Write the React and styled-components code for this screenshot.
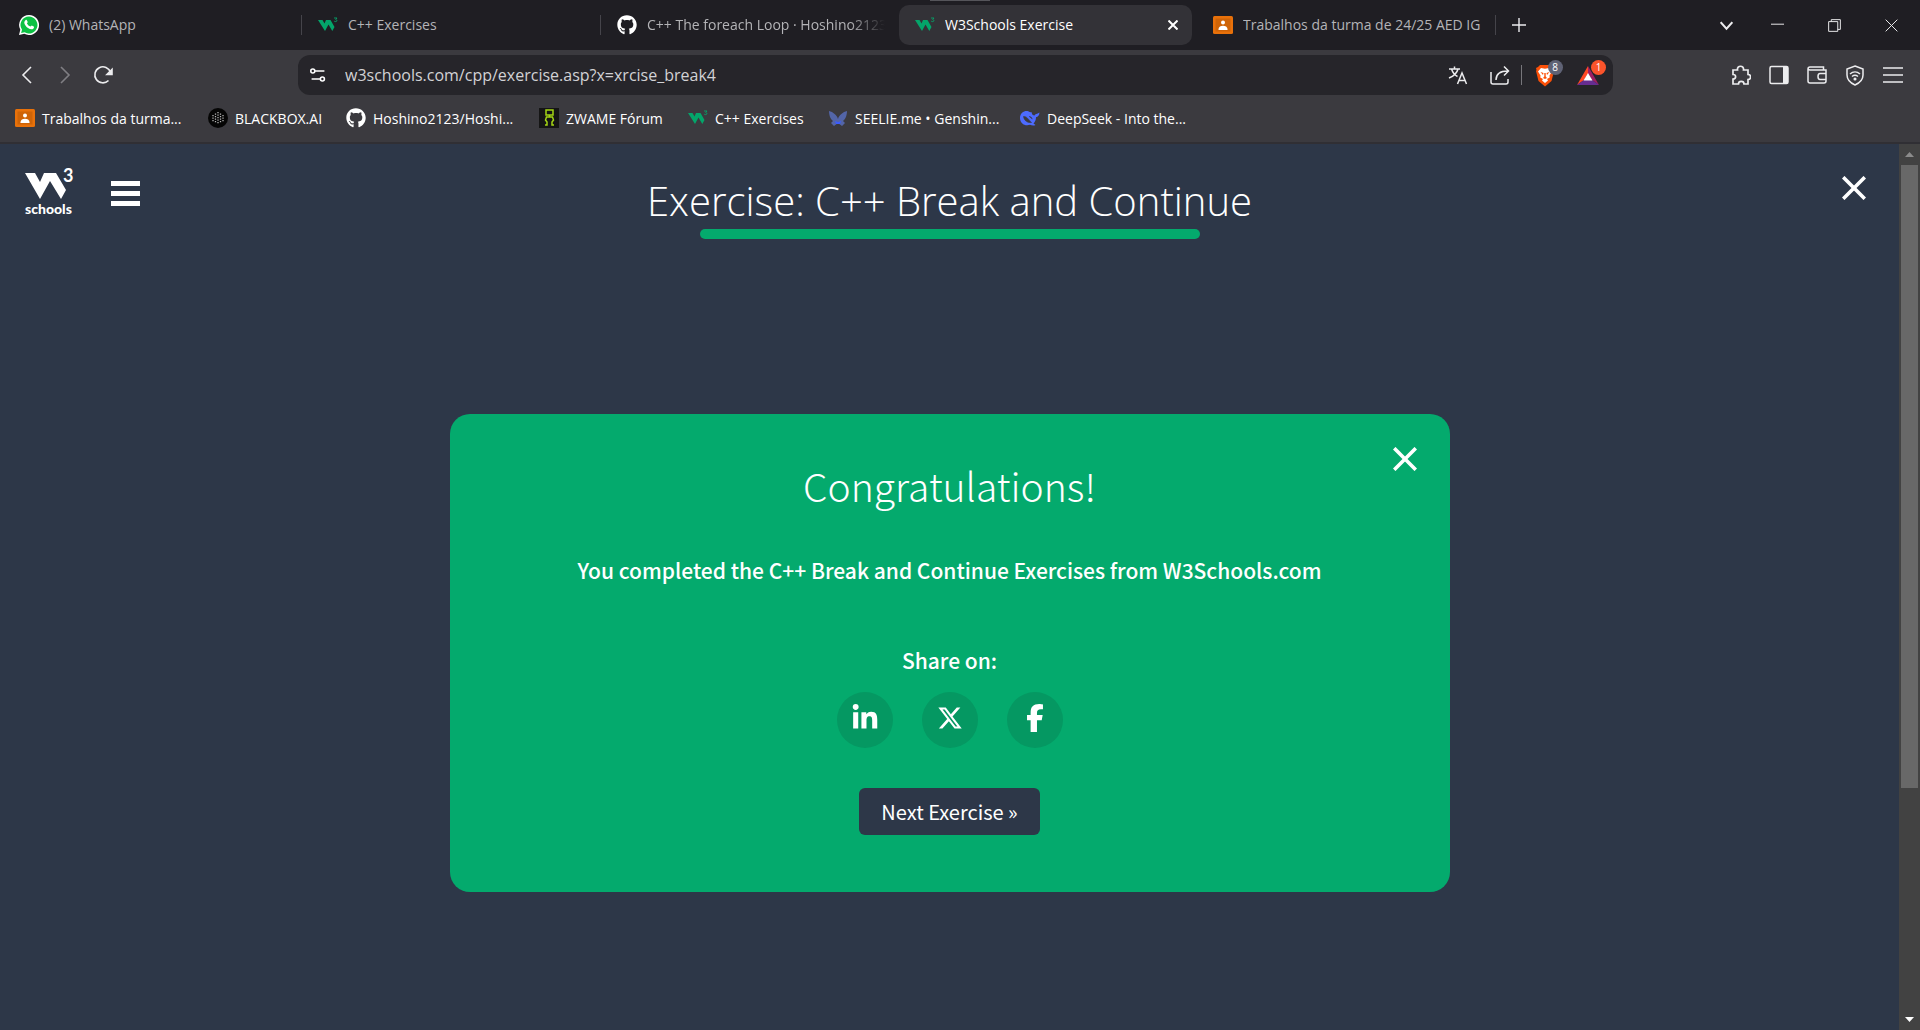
import React from "react";
import styled, { createGlobalStyle, css } from "styled-components";
import { FaLinkedinIn, FaXTwitter, FaFacebookF, FaGithub } from "react-icons/fa6";

const ui = `"Open Sans", "Noto Sans", sans-serif`;
const site = `"Noto Sans CJK SC", "Noto Sans", sans-serif`;

const Global = createGlobalStyle`
  *, *::before, *::after { box-sizing: border-box; }
  body { margin: 0; background: #2d3748; color: #fff; font-family: ${ui}; }
  button { border: 0; padding: 0; background: none; color: inherit; font: inherit; cursor: pointer; }
  a { color: inherit; text-decoration: none; }
  svg { display: block; flex: none; }
`;

const Window = styled.div`
  display: flex;
  flex-direction: column;
  height: 100vh;
  overflow: hidden;
`;

const TabStrip = styled.header`
  position: relative;
  display: flex;
  align-items: center;
  height: 50px;
  flex: none;
  padding-left: 3px;
  background: #1f1e23;
`;

const GrabHandle = styled.span`
  position: absolute;
  top: 0;
  left: calc(50% - 30px);
  width: 60px;
  height: 1px;
  background: #55555a;
`;

const Tab = styled.div`
  display: flex;
  align-items: center;
  gap: 10px;
  width: ${(p) => p.$w}px;
  height: 40px;
  padding: 0 14px 0 16px;
  border-radius: 10px;
  font-size: 14px;
  line-height: 18px;
  color: #b4b4b7;
  ${(p) => p.$active && css`
    margin-right: 5px;
    background: #333237;
    color: #fff;
  `}
`;

const TabTitle = styled.a`
  flex: 1;
  overflow: hidden;
  white-space: nowrap;
  ${(p) => p.$fade && css`mask-image: linear-gradient(to right, #000 85%, transparent);`}
`;

const Divider = styled.span`
  width: 1px;
  height: 20px;
  flex: none;
  background: ${(p) => (p.$light ? "#77767b" : "#45444a")};
`;

const Spacer = styled.div`
  flex: 1;
`;

const IconButton = styled.button`
  display: grid;
  place-items: center;
  flex: none;
  width: ${(p) => p.$w || 38}px;
  height: 40px;
  color: ${(p) => (p.$dim ? "#807f84" : "#ececee")};
`;

const Toolbar = styled.div`
  display: flex;
  align-items: center;
  height: 50px;
  flex: none;
  padding: 0 8px;
  background: #3b3a3f;
`;

const Side = styled.div`
  display: flex;
  width: ${(p) => p.$w}px;
  justify-content: ${(p) => (p.$end ? "flex-end" : "flex-start")};
`;

const AddressBar = styled.form`
  display: flex;
  align-items: center;
  flex: 1;
  height: 40px;
  padding: 0 4px 0 12px;
  border-radius: 12px;
  background: #26252a;
`;

const Address = styled.input`
  flex: 1;
  min-width: 0;
  margin-left: 19px;
  border: 0;
  padding: 0;
  outline: 0;
  background: none;
  color: #d2d2d5;
  font: 400 16px ${ui};
`;

const Badged = styled(IconButton)`
  position: relative;
`;

const Badge = styled.span`
  position: absolute;
  top: 5px;
  left: calc(50% + 3px);
  width: 15px;
  height: 15px;
  border-radius: 8px;
  background: ${(p) => p.$bg};
  color: #fff;
  font-size: 10px;
  line-height: 15px;
  text-align: center;
`;

const Bookmarks = styled.nav`
  display: flex;
  align-items: center;
  height: 44px;
  flex: none;
  padding: 0 15px 6px;
  background: #3b3a3f;
  border-bottom: 2px solid #302f34;
`;

const Bookmark = styled.a`
  display: flex;
  align-items: center;
  gap: 7px;
  width: ${(p) => p.$w}px;
  font-size: 14px;
  white-space: nowrap;
`;

const Viewport = styled.div`
  display: flex;
  flex: 1;
  min-height: 0;
`;

const Page = styled.main`
  display: flex;
  flex-direction: column;
  flex: 1;
  background: #2d3748;
`;

const PageHead = styled.div`
  display: grid;
  grid-template-columns: 1fr auto 1fr;
  align-items: start;
  padding: 24px 0;
`;

const Brand = styled.div`
  display: flex;
  align-items: flex-start;
  gap: 37px;
  padding-left: 24px;
`;

const MenuButton = styled.button`
  display: flex;
  flex-direction: column;
  gap: 5px;
  margin-top: 13px;
`;

const MenuBar = styled.span`
  height: 5px;
  width: 29px;
  background: #fff;
`;

const Heading = styled.div`
  display: flex;
  flex-direction: column;
  align-items: center;
  padding-top: 5px;
`;

const Title = styled.h1`
  margin: 0;
  font: 300 40px/56px ${ui};
`;

const Progress = styled.div`
  width: 500px;
  height: 10px;
  border-radius: 5px;
  background: #04aa6d;
`;

const CloseButton = styled.button`
  display: grid;
  place-items: center;
  width: 26px;
  height: 26px;
`;

const PageClose = styled(CloseButton)`
  margin: 7px 32px 0 0;
  justify-self: end;
`;

const Card = styled.section`
  position: relative;
  display: flex;
  flex-direction: column;
  align-items: center;
  width: 1000px;
  margin: 151px auto 0;
  padding: 41px 32px 57px;
  border-radius: 20px;
  background: #04aa6d;
  font-family: ${site};
`;

const CardClose = styled(CloseButton)`
  position: absolute;
  top: 32px;
  right: 32px;
`;

const CardTitle = styled.h2`
  margin: 0;
  font: 300 39px/60px ${site};
`;

const CardText = styled.p`
  margin: ${(p) => p.$top}px 0 0;
  font-size: 21px;
  font-weight: 500;
  line-height: 36px;
`;

const ShareRow = styled.div`
  display: flex;
  gap: 29px;
  margin-top: 14px;
`;

const ShareLink = styled.a`
  display: grid;
  place-items: center;
  width: 56px;
  height: 56px;
  padding-bottom: 4px;
  border-radius: 50%;
  background: #059862;
`;

const NextButton = styled.button`
  height: 47px;
  margin-top: 40px;
  padding: 0 22px;
  border-radius: 6px;
  background: #2d3748;
  font: 400 20px/47px ${site};
`;

const ScrollTrack = styled.div`
  display: flex;
  flex-direction: column;
  width: 21px;
  padding: 0 2px;
  background: #424242;
`;

const ScrollArrow = styled.button`
  display: grid;
  place-items: center;
  height: 21px;
  color: ${(p) => (p.$off ? "#8b8b8b" : "#fff")};
`;

const ScrollRail = styled.div`
  flex: 1;
`;

const ScrollThumb = styled.div`
  height: 73.8%;
  background: #686868;
`;

const Line = ({ d, size = 20, w = 1.6 }) => (
  <svg width={size} height={size} viewBox="0 0 20 20" fill="none" stroke="currentColor" strokeWidth={w}>
    <path d={d} />
  </svg>
);

const Cross = ({ size, w = 2 }) => <Line size={size} w={w} d="M1 1L19 19M19 1L1 19" />;

const WhatsApp = () => (
  <svg width="20" height="20" viewBox="0 0 20 20">
    <path d="M10 0a10 10 0 1 1-4.7 18.8L0 20l1.3-5.2A10 10 0 0 1 10 0z" fill="#fff" />
    <path d="M10 1.5a8.500 8.500 0 1 1-4.400 15.800l-3.500.8.9-3.300A8.500 8.500 0 0 1 10 1.500z" fill="#0cc143" />
    <path d="M6.500 5.200c.7-.6 1.200-.4 1.500.2l.7 1.600c.1.500-.8 1.200-.7 1.500.8 1.600 1.900 2.500 3.400 3.100.4.100 1-1.100 1.400-1l1.900.9c.6.300.3 1.500-.2 2-1.400 1.400-3.400.9-5.500-.4C6.900 11.700 5.600 9.600 5.300 8c-.1-1.200.4-2.100 1.200-2.800z" fill="#fff" />
  </svg>
);

const W3 = () => (
  <svg width="20" height="20" viewBox="0 0 20 20">
    <path d="M0 5h4.500l2 3.500L8 5h4.500l4 7-2.200 4-3.800-6.500L7 16z" fill="#04a56a" />
    <path d="M16 3h3l-1.300 1.500c1.800.4 1.300 2.300-.2 2.100-.7 0-1.200-.3-1.400-.7" fill="none" stroke="#04a56a" strokeWidth=".9" />
  </svg>
);

const Classroom = () => (
  <svg width="20" height="18" viewBox="0 0 20 18">
    <rect width="20" height="18" rx="1.500" fill="#e8710a" />
    <rect x="2.500" y="2.500" width="15" height="13" fill="#cf6407" />
    <circle cx="10" cy="6.500" r="2" fill="#fff" />
    <path d="M5.500 13c0-4.500 9-4.500 9 0v1h-9z" fill="#fff" />
  </svg>
);

const Blackbox = () => (
  <svg width="20" height="20" viewBox="0 0 20 20">
    <circle cx="10" cy="10" r="10" fill="#050505" />
    <g fill="none" stroke="#b5b5b5" strokeWidth="1.300" strokeDasharray="1.200 1.300">
      <path d="M10 4v12M7.500 5.500v9.500M12.500 5.500v9.500M5 7v6.500M15 7v6.500" />
    </g>
  </svg>
);

const Zwame = () => (
  <svg width="20" height="20" viewBox="0 0 20 20" fill="none" stroke="#a4d515" strokeWidth="1.500">
    <rect width="20" height="20" fill="#151515" stroke="none" />
    <path d="M7 2h7v5H7zM10.500 7v2M6 17h2v-3l-1.500-2 1-3h6l1 3-1.500 2v3h2" />
  </svg>
);

const Butterfly = () => (
  <svg width="20" height="20" viewBox="0 0 20 20">
    <path d="M1 3c4 1 8 4 9 8 1-4 5-7 9-8 0 3-1 8-4 10l2 2-3 3-4-3-4 3-3-3 2-2C2 11 1 6 1 3z" fill="#5365a8" />
    <path d="M7 13l3 1 3-1-1 3H8z" fill="#3b5bff" />
  </svg>
);

const DeepSeek = () => (
  <svg width="20" height="20" viewBox="0 0 20 20">
    <path d="M11.500 4c.3 2.500 1.500 3.500 3 3.500.5-1.500 2.500-1.500 5-3-.2 3-1.500 4.300-3.500 4.800 0 2.700-1 4.700-2.500 6.200l2 1.500c-2 1-4 .3-5.500-.2-5 1.700-10-1.300-10-6.800C0 5 4 2.500 7.500 3c1.500.2 2.500 2 4 1z" fill="#4d6bfe" />
    <path d="M3.500 8.500c3-.5 5 3 8 6-4 .5-7.500-2-8-6zM9 8.500c2 0 3 1.200 3.200 2.700" fill="#3b3a3f" stroke="#3b3a3f" strokeWidth=".6" />
  </svg>
);

const Brave = () => (
  <svg width="20" height="23" viewBox="0 0 20 23">
    <path d="M5 1h10l2 2 2 1-.5 2 .5 1-2.500 10L10 22.500 3.500 17 1 7l.5-1L1 4l2-1z" fill="#fb5008" />
    <path d="M6 4l4 .8L14 4l3 3.500-2.500 4 .2 2L12 15l1 1.500-3 2.500-3-2.500L8 15l-2.700-1.500.2-2L3 7.500z" fill="#fff" />
    <path d="M5.500 8l3 1-.5 2zM14.500 8l-3 1 .5 2zM9.300 9h1.400v3.500L12 14l-2 1-2-1 1.300-1.500z" fill="#fb5008" />
  </svg>
);

const Rewards = () => (
  <svg width="22" height="19" viewBox="0 0 22 19">
    <path d="M11 0v7.500L7 14l-7 5z" fill="#ff4724" />
    <path d="M11 0l11 19-7-5-4-6.500z" fill="#9e1f63" />
    <path d="M0 19l7-5h8l7 5z" fill="#662d91" />
    <path d="M11 7l4.500 7.500h-9z" fill="#fff" />
  </svg>
);

const Translate = () => <Line w={1.5} d="M1 4h11M6.500 1.500V4M10 4c-1 4-4 7-9 9M3.500 4c1 3 3 6 6 7.500M9.500 19l4.500-11 4.500 11M11 15.500h6" />;
const Share = () => <Line w={1.5} d="M1 7v10q0 2 2 2h13q2 0 2-2v-3M6 15c0-6 4-9 12-9M14 1.500L18.500 6 14 10.500" />;
const Puzzle = () => <Line w={1.7} d="M2 5h4.500c-.8-5 6.800-5 6 0H17v4.500c3.500 0 3.500 5 0 5V19h-4c0-3.500-5.500-3.500-5.500 0H2v-5c3.500 0 3.500-4.500 0-4.500z" />;
const Shield = () => (
  <svg width="20" height="21" viewBox="0 0 20 21" fill="none" stroke="currentColor" strokeWidth="1.500">
    <path d="M10 1l8 3v6c0 5-3.500 8-8 10-4.500-2-8-5-8-10V4z" />
    <path d="M5 9c3-2.800 7-2.800 10 0M7 11.500c2-1.600 4-1.600 6 0" />
    <circle cx="10" cy="14" r=".8" fill="currentColor" />
  </svg>
);
const SidePanel = () => (
  <svg width="20" height="20" viewBox="0 0 20 20" fill="none" stroke="currentColor" strokeWidth="1.500">
    <rect x="1" y="1.500" width="18" height="17" rx="1.500" />
    <path d="M14 2h5v16h-5z" fill="currentColor" stroke="none" />
  </svg>
);
const Wallet = () => <Line w={1.5} d="M16.500 5V2H3Q1 2 1 4v12q0 2 2 2h14q2 0 2-2V5H3Q1 5 1 3.500M19 8.500h-6q-2 0-2 3t2 3h6" />;

const Logo = () => (
  <svg width="50" height="48" viewBox="0 0 50 48" fill="#fff" overflow="visible" role="img" aria-label="W3Schools">
    <path d="M1 5h10l5 9 4-9h12l10 17-5 9-11-18-10 18z" />
    <text x="39" y="14" fontFamily="Lato" fontWeight="700" fontSize="18">3</text>
    <text x="1" y="46" fontFamily="Lato" fontWeight="900" fontSize="14">schools</text>
  </svg>
);

const tabs = [
  { t: "(2) WhatsApp", w: 298, icon: <WhatsApp />, sep: true },
  { t: "C++ Exercises", w: 298, icon: <W3 />, sep: true },
  { t: "C++ The foreach Loop · Hoshino2123", w: 298, icon: <FaGithub size={20} color="#fff" />, fade: true },
  { t: "W3Schools Exercise", w: 293, icon: <W3 />, active: true },
  { t: "Trabalhos da turma de 24/25 AED IG", w: 298, icon: <Classroom />, sep: true },
];

const bookmarks = [
  ["Trabalhos da turma...", 193, <Classroom />],
  ["BLACKBOX.AI", 138, <Blackbox />],
  ["Hoshino2123/Hoshi...", 193, <FaGithub size={20} />],
  ["ZWAME Fórum", 149, <Zwame />],
  ["C++ Exercises", 140, <W3 />],
  ["SEELIE.me • Genshin...", 192, <Butterfly />],
  ["DeepSeek - Into the...", 193, <DeepSeek />],
];

export default function App() {
  return (
    <Window>
      <Global />
      <TabStrip>
        <GrabHandle />
        {tabs.map((tab) => (
          <React.Fragment key={tab.t}>
            <Tab $w={tab.w} $active={tab.active}>
              {tab.icon}
              <TabTitle href="#" $fade={tab.fade}>{tab.t}</TabTitle>
              {tab.active && <button aria-label="Close tab"><Cross size={10} w={4} /></button>}
            </Tab>
            {tab.sep && <Divider />}
          </React.Fragment>
        ))}
        <IconButton $w={46} aria-label="New tab"><Line size={14} w={2} d="M10 0v20M0 10h20" /></IconButton>
        <Spacer />
        <IconButton $w={46} aria-label="Search tabs"><Line size={13} w={3} d="M1 5l9 10 9-10" /></IconButton>
        <IconButton $w={57} aria-label="Minimize"><Line size={13} w={1.5} d="M0 8h20" /></IconButton>
        <IconButton $w={57} aria-label="Restore"><Line size={13} w={1.5} d="M1 4h14v15H1zM5 4V1h14v15h-4" /></IconButton>
        <IconButton $w={57} aria-label="Close"><Cross size={13} w={1.5} /></IconButton>
      </TabStrip>
      <Toolbar>
        <Side $w={290}>
          <IconButton aria-label="Back"><Line d="M14 2L6 10l8 8" /></IconButton>
          <IconButton $dim aria-label="Forward"><Line d="M6 2l8 8-8 8" /></IconButton>
          <IconButton aria-label="Reload">
            <svg width="20" height="20" viewBox="0 0 20 20" fill="none" stroke="currentColor" strokeWidth="1.600">
              <path d="M15.500 15.500A8 8 0 1 1 17.500 7.500" />
              <path d="M19 4.500v5h-5z" fill="currentColor" />
            </svg>
          </IconButton>
        </Side>
        <AddressBar>
          <Line size={16} w={2} d="M6 5a2.500 2.500 0 1 0-5 0 2.500 2.500 0 0 0 5 0h12M13 15a2.500 2.500 0 1 0 5 0 2.500 2.500 0 0 0-5 0H2" />
          <Address aria-label="Address" defaultValue="w3schools.com/cpp/exercise.asp?x=xrcise_break4" />
          <IconButton type="button" $w={42} aria-label="Translate"><Translate /></IconButton>
          <IconButton type="button" $w={42} aria-label="Share"><Share /></IconButton>
          <Divider $light />
          <Badged type="button" $w={45} aria-label="Shields"><Brave /><Badge $bg="#5f6275">8</Badge></Badged>
          <Badged type="button" $w={42} aria-label="Rewards"><Rewards /><Badge $bg="#fb542b">1</Badge></Badged>
        </AddressBar>
        <Side $w={299} $end>
          <IconButton aria-label="Extensions"><Puzzle /></IconButton>
          <IconButton aria-label="Sidebar"><SidePanel /></IconButton>
          <IconButton aria-label="Wallet"><Wallet /></IconButton>
          <IconButton aria-label="VPN"><Shield /></IconButton>
          <IconButton aria-label="Menu"><Line w={1.7} d="M0 3h20M0 10h20M0 17h20" /></IconButton>
        </Side>
      </Toolbar>
      <Bookmarks>
        {bookmarks.map(([t, w, icon]) => <Bookmark href="#" key={t} $w={w}>{icon}{t}</Bookmark>)}
      </Bookmarks>
      <Viewport>
        <Page>
          <PageHead>
            <Brand>
              <Logo />
              <MenuButton aria-label="Menu"><MenuBar /><MenuBar /><MenuBar /></MenuButton>
            </Brand>
            <Heading><Title>Exercise: C++ Break and Continue</Title><Progress /></Heading>
            <PageClose aria-label="Close exercise"><Cross size={24} w={3} /></PageClose>
          </PageHead>
          <Card>
            <CardClose aria-label="Close message"><Cross size={24} w={3} /></CardClose>
            <CardTitle>Congratulations!</CardTitle>
            <CardText $top={37}>You completed the C++ Break and Continue Exercises from W3Schools.com</CardText>
            <CardText $top={54}>Share on:</CardText>
            <ShareRow>
              <ShareLink href="#" aria-label="LinkedIn"><FaLinkedinIn size={28} /></ShareLink>
              <ShareLink href="#" aria-label="X"><FaXTwitter size={26} /></ShareLink>
              <ShareLink href="#" aria-label="Facebook"><FaFacebookF size={28} /></ShareLink>
            </ShareRow>
            <NextButton>Next Exercise »</NextButton>
          </Card>
        </Page>
        <ScrollTrack>
          <ScrollArrow $off aria-label="Scroll up"><svg width="9" height="5"><path d="M0 5l4.500-5L9 5z" fill="currentColor" /></svg></ScrollArrow>
          <ScrollRail><ScrollThumb /></ScrollRail>
          <ScrollArrow aria-label="Scroll down"><svg width="9" height="5"><path d="M0 0h9L4.500 5z" fill="currentColor" /></svg></ScrollArrow>
        </ScrollTrack>
      </Viewport>
    </Window>
  );
}
